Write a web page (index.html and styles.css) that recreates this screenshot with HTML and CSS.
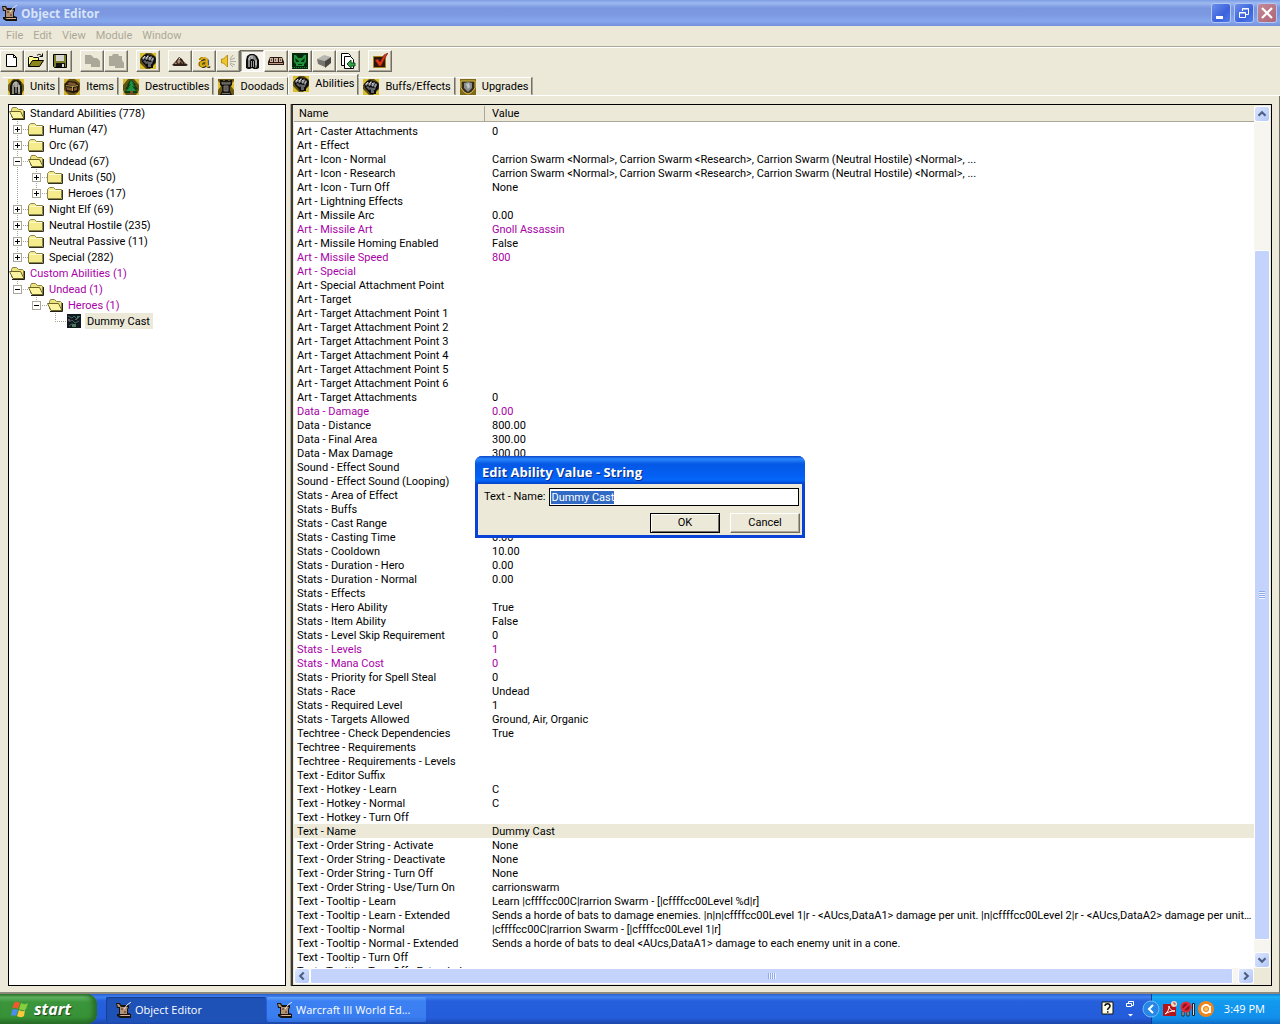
FILE: index.html
```html
<!DOCTYPE html>
<html lang="en">
<head>
  <meta charset="UTF-8">
  <meta name="viewport" content="width=device-width, initial-scale=1.0">
  <title>Object Editor</title>
  <link rel="stylesheet" href="styles.css">
</head>
<body>
  <!-- shared icons -->
  <svg class="sprites" aria-hidden="true">
    <symbol id="i-scroll" viewBox="0 0 16 16"><path d="M0 1h4l1 2h8v3l-1 1v4l3 1v4H4l-3-2v-2h2V6H1z" fill="#17120e"/><path d="M1 2h2l2 3H2zM4 5h8l-1 2v5H4z" fill="#b59273"/><path d="M3 13h11v1H5z" fill="#d6b392"/><path d="M5 6h2v2H5zM8 9h2v2H8z" fill="#806047"/><path d="M15 0l-4 3-3 4" fill="none" stroke="#e7e9ed"/></symbol>
    <symbol id="i-folder" viewBox="0 0 16 16"><path d="M.5 4.500l2-2h4l2 2h6v9H.5z" fill="#f5eb8c" stroke="#8b8547"/><path d="M2 5.500h12" stroke="#fffbd0"/><path d="M1 14.500h14.500V5" fill="none" stroke="#33301c"/></symbol>
    <symbol id="i-open" viewBox="0 0 16 16"><path d="M2.500 12V4.500l1-2h4l2 2h4l1 1V12z" fill="#eee27b" stroke="#898344"/><path d="M.5 6.500h11l3.500 7H4z" fill="#fbf39d" stroke="#6c662d"/><path d="M3 14.500h12.500V6" fill="none" stroke="#222015"/></symbol>
    <symbol id="i-fist" viewBox="0 0 16 16"><path fill="#5d4d12" d="M0 0h16v16H0z"/><path d="M0 0h6L0 6zM11 0h5v4zM0 10v6h6zM16 10v6h-6z" fill="#d9bf2c"/><path d="M1 5l3-3 3-1 3 1 4 1 2 3-1 4-2 2v3H7l-2-3-3-3z" fill="#0b0b0d"/><path d="M2 5l3-2 1 1-3 3zM5 6l3-4 1 1-2 4zM8 6l3-3 1 1-2 4zM11 7l2-3 1 2-2 3z" fill="#a2a2a4"/><path d="M3 8l2-1 3 3-2 1zM7 8l3 1 3-1-1 3-4 1zM8 12l3-1v3H8z" fill="#65666a"/><path d="M3 5l2-2M6 5l2-2M9 5l1-1" stroke="#dededf" stroke-width=".8"/></symbol>
    <symbol id="i-helm" viewBox="0 0 16 16"><path d="M2 15V7l1-4 3-2h4l3 2 2 4v8l-2 1h-3l-2-1-2 1H4z" fill="#0d0d0d"/><path d="M4 6l1-3 2-1h2l2 1 2 4v6l-1 2h-1V8L9 6H7L6 8v6H4z" fill="#858585"/><path d="M5 7V5l2-2M12 7v5M8 3v3" fill="none" stroke="#d4d4d4"/><path d="M7 8h1v6H7zM9 8h1v6H9z" fill="#999"/></symbol>
    <symbol id="i-unit" viewBox="0 0 16 16"><path d="M0 0h16v16H0z" fill="#6e5c15"/><path d="M0 0h5L0 6zM11 0h5v6zM0 11v5h3zM16 11v5h-3z" fill="#e0c33e"/><path d="M2 16V7l2-5 3-1h3l3 2 1 5v8z" fill="#15140f"/><path d="M4 15V7l2-4h4l2 4v8h-2V8H6v7z" fill="#8d8b83"/><path d="M5 6l2-3M8 2v12M11 6v7" fill="none" stroke="#cfccc0"/></symbol>
    <symbol id="i-chest" viewBox="0 0 16 16"><path d="M0 0h16v16H0z" fill="#665216"/><path d="M0 0h5L0 5zM11 0h5v4zM0 11v5h5zM16 11v5h-5z" fill="#cfb137"/><path d="M1 5l3-3 8 1 3 3-1 7-5 1-7-2z" fill="#1a130b"/><path d="M3 5l2-2 6 1 2 2-4 1zM2 8l6 1v3l-5-1zM10 9l3-1v3l-3 1z" fill="#815530"/><path d="M2 6.500l7 1 5-1M8.500 7v5" fill="none" stroke="#b8a04a"/></symbol>
    <symbol id="i-tree" viewBox="0 0 16 16"><path d="M0 0h16v16H0z" fill="#5f5313"/><path d="M0 0h5L0 6zM11 0h5v6zM0 11v5h3zM16 11v5h-3z" fill="#d3ba34"/><path d="M8 0l5 6h-1l3 4-2 1 2 3H1l3-4H2l3-4H4z" fill="#0d3b14"/><path d="M8 1l3 4-2-1 3 4-3-1 4 5H3l4-4-2 1 3-4-2 1z" fill="#1e9142"/><path d="M7 12h3v4H7z" fill="#7a4c25"/></symbol>
    <symbol id="i-tower" viewBox="0 0 16 16"><path d="M0 0h16v16H0z" fill="#6b5813"/><path d="M0 2v9l4-5zM16 2v9l-4-5z" fill="#dcc03a"/><path d="M2 1h3v1h2V1h3v1h2V1h2v5l-2 2v4l2 4H2l2-4V8L2 6z" fill="#151411"/><path d="M4 3v2h8V3M6 7h4v5H6zM4 14.500h8" fill="#5c5a54" stroke="#76736c"/></symbol>
    <symbol id="i-shield" viewBox="0 0 16 16"><path d="M0 0h16v16H0z" fill="#80681b"/><path d="M1 2h14v7l-3 4-4 2-4-2-3-4z" fill="#332b19" stroke="#e1c64c"/><path d="M4 4l4-1 4 1v5l-4 4-4-4z" fill="#8b8e91"/><path d="M6 5l3-1 1 4-2 2z" fill="#c2c4c6"/></symbol>
    <symbol id="i-mound" viewBox="0 0 16 16"><path d="M0 12l3-3 4-5 3 2 2 3 4 3-2 1H2z" fill="#302019"/><path d="M2 11l2-2 1 2zM5 9l2-4 1 2 1 1-2 3zM9 8l2 2-1 1zM12 11l1-1 1 1z" fill="#a98974"/><path d="M7 5l1 1" stroke="#e4d3c4"/></symbol>
    <symbol id="i-sound" viewBox="0 0 16 16"><path d="M1.500 6h2L7.500 2v12L3.500 10h-2z" fill="#efc631" stroke="#b8900f"/><path d="M10 6l3-4M10 7l5-2M10 8.500h6M10 10l5 2M10 11l3 3" stroke="#9a9a96" stroke-width=".8"/></symbol>
    <symbol id="i-cart" viewBox="0 0 16 16"><path d="M2 4h12l2 5v3H0V9z" fill="#2a1913"/><path d="M2 5h3v4H2zM6 5h4v4H6zM11 5h3v4h-3z" fill="#c9b5a4"/><path d="M3 6h1v2H3zM7 6h1v2H7zM12 6h1v2h-1z" fill="#7c4637"/><path d="M1 10.500h14" stroke="#c49c86"/></symbol>
    <symbol id="i-skull" viewBox="0 0 16 16"><path d="M0 0h16v16H0z" fill="#06290d"/><path d="M2 2h2l2 3h4l2-3h2v7l-2 2v2H4v-2L2 9z" fill="#20913b"/><path d="M3 5l4 3v1H4zM13 5L9 8v1h3zM6 11h4v1H6z" fill="#04320b"/><path d="M0 14.500h16" stroke="#1a8f2b" stroke-dasharray="1 1"/></symbol>
    <symbol id="i-cube" viewBox="0 0 16 16"><path d="M1 6l7-4 7 2-6 4z" fill="#b7b5af"/><path d="M1 6l8 2v6l-7-3z" fill="#77746e"/><path d="M9 8l6-4v6l-6 5z" fill="#484641"/></symbol>
  </svg>

  <main class="window">
    <header class="titlebar">
      <svg class="icon"><use href="#i-scroll"/></svg>
      <h1>Object Editor</h1>
      <div class="sysbuttons">
        <button type="button" aria-label="Minimize"><svg viewBox="0 0 18 18"><path d="M4 12h7v3H4z" fill="#fff"/></svg></button>
        <button type="button" aria-label="Restore"><svg viewBox="0 0 18 18"><path d="M7.500 7V4.500h6v6H11M7 5h7M4.500 8.500h6v5h-6zM4 9h7" fill="none" stroke="#fff"/></svg></button>
        <button type="button" class="close" aria-label="Close"><svg viewBox="0 0 18 18"><path d="M4 4l10 10M14 4L4 14" stroke="#fff" stroke-width="2.200"/></svg></button>
      </div>
    </header>

    <nav class="menubar">
      <button type="button" disabled>File</button>
      <button type="button" disabled>Edit</button>
      <button type="button" disabled>View</button>
      <button type="button" disabled>Module</button>
      <button type="button" disabled>Window</button>
    </nav>

    <div class="toolbar">
      <div class="group">
        <button type="button" aria-label="New"><svg class="icon" viewBox="0 0 16 16"><path d="M2.500 1.500h7l3 3v9h-10z" fill="#fff" stroke="#000"/><path d="M9.500 1.500v3h3" fill="none" stroke="#000"/></svg></button>
        <button type="button" aria-label="Open"><svg class="icon" viewBox="0 0 16 16"><path d="M0.500 13.500v-9l1-1h3l1 1h5v3" fill="#fffb8b" stroke="#000"/><path d="M0.500 13.500l4-6h11l-4 6z" fill="#8c861b" stroke="#000"/><path d="M9 2.500c2-2 4-1 5 1M11.500 3.500h3v-3" fill="none" stroke="#000"/></svg></button>
        <button type="button" aria-label="Save"><svg class="icon" viewBox="0 0 16 16"><path d="M1.500 1.500h13v13h-12l-1-1z" fill="#7b7c26" stroke="#000"/><path d="M4 2h8v6H4z" fill="#d7d7cf"/><path d="M4 10h9v4H4z" fill="#111"/><path d="M10 11h2v3h-2z" fill="#ddd"/></svg></button>
      </div>
      <div class="group">
        <button type="button" disabled aria-label="Copy"><svg class="icon" viewBox="0 0 16 16"><path d="M1 2h6l3 3h3l3 3v6H7v-3H1z" fill="#aca899"/></svg></button>
        <button type="button" disabled aria-label="Paste"><svg class="icon" viewBox="0 0 16 16"><path d="M1 3h3l1-2h5l1 2h3v4l2 3v5H7v-2H1z" fill="#aca899"/></svg></button>
      </div>
      <div class="group">
        <button type="button" aria-label="New ability"><svg class="icon"><use href="#i-fist"/></svg></button>
      </div>
      <div class="group">
        <button type="button" aria-label="Terrain Editor"><svg class="icon"><use href="#i-mound"/></svg></button>
        <button type="button" aria-label="Trigger Editor" class="letter">a</button>
        <button type="button" aria-label="Sound Editor"><svg class="icon"><use href="#i-sound"/></svg></button>
        <button type="button" aria-label="Object Editor" class="pressed"><svg class="icon"><use href="#i-helm"/></svg></button>
        <button type="button" aria-label="Campaign Editor"><svg class="icon"><use href="#i-cart"/></svg></button>
        <button type="button" aria-label="AI Editor"><svg class="icon"><use href="#i-skull"/></svg></button>
        <button type="button" aria-label="Object Manager"><svg class="icon"><use href="#i-cube"/></svg></button>
        <button type="button" aria-label="Import Manager"><svg class="icon" viewBox="0 0 16 16"><path d="M1.500 0.500h7l2 2v10h-9z" fill="#fff" stroke="#000"/><path d="M4.500 3.500h6l3 3v9h-9z" fill="#fff" stroke="#000"/><path d="M7 11l4-4v3h4v3h-4v2z" fill="#37a64a" stroke="#124e1d"/></svg></button>
      </div>
      <div class="group">
        <button type="button" aria-label="Test Map"><svg class="icon" viewBox="0 0 16 16"><path d="M1.500 3.500h12v11h-12z" fill="#2b160b" stroke="#a98521"/><path d="M3 7l3-1 2 3 4-7 4-2-3 5-4 8H7z" fill="#e0361b" stroke="#66140a" stroke-width=".6"/></svg></button>
      </div>
    </div>

    <div class="tabs" role="tablist">
      <button type="button" role="tab"><svg class="icon"><use href="#i-unit"/></svg>Units</button>
      <button type="button" role="tab"><svg class="icon"><use href="#i-chest"/></svg>Items</button>
      <button type="button" role="tab"><svg class="icon"><use href="#i-tree"/></svg>Destructibles</button>
      <button type="button" role="tab"><svg class="icon"><use href="#i-tower"/></svg>Doodads</button>
      <button type="button" role="tab" class="selected" aria-selected="true"><svg class="icon"><use href="#i-fist"/></svg>Abilities</button>
      <button type="button" role="tab"><svg class="icon"><use href="#i-fist"/></svg>Buffs/Effects</button>
      <button type="button" role="tab"><svg class="icon"><use href="#i-shield"/></svg>Upgrades</button>
    </div>

    <div class="panes">
      <div class="tree">
        <ul>
          <li>
            <div class="node"><svg class="icon"><use href="#i-open"/></svg><span>Standard Abilities (778)</span></div>
            <ul>
              <li><div class="node"><button type="button" class="toggle plus" aria-label="Expand"></button><svg class="icon"><use href="#i-folder"/></svg><span>Human (47)</span></div></li>
              <li><div class="node"><button type="button" class="toggle plus" aria-label="Expand"></button><svg class="icon"><use href="#i-folder"/></svg><span>Orc (67)</span></div></li>
              <li>
                <div class="node"><button type="button" class="toggle" aria-label="Collapse"></button><svg class="icon"><use href="#i-open"/></svg><span>Undead (67)</span></div>
                <ul>
                  <li><div class="node"><button type="button" class="toggle plus" aria-label="Expand"></button><svg class="icon"><use href="#i-folder"/></svg><span>Units (50)</span></div></li>
                  <li><div class="node"><button type="button" class="toggle plus" aria-label="Expand"></button><svg class="icon"><use href="#i-folder"/></svg><span>Heroes (17)</span></div></li>
                </ul>
              </li>
              <li><div class="node"><button type="button" class="toggle plus" aria-label="Expand"></button><svg class="icon"><use href="#i-folder"/></svg><span>Night Elf (69)</span></div></li>
              <li><div class="node"><button type="button" class="toggle plus" aria-label="Expand"></button><svg class="icon"><use href="#i-folder"/></svg><span>Neutral Hostile (235)</span></div></li>
              <li><div class="node"><button type="button" class="toggle plus" aria-label="Expand"></button><svg class="icon"><use href="#i-folder"/></svg><span>Neutral Passive (11)</span></div></li>
              <li><div class="node"><button type="button" class="toggle plus" aria-label="Expand"></button><svg class="icon"><use href="#i-folder"/></svg><span>Special (282)</span></div></li>
            </ul>
          </li>
          <li>
            <div class="node changed"><svg class="icon"><use href="#i-open"/></svg><span>Custom Abilities (1)</span></div>
            <ul>
              <li>
                <div class="node changed"><button type="button" class="toggle" aria-label="Collapse"></button><svg class="icon"><use href="#i-open"/></svg><span>Undead (1)</span></div>
                <ul>
                  <li>
                    <div class="node changed"><button type="button" class="toggle" aria-label="Collapse"></button><svg class="icon"><use href="#i-open"/></svg><span>Heroes (1)</span></div>
                    <ul>
                      <li><div class="node leaf"><svg class="icon" viewBox="0 0 16 16"><path d="M1 1h14v14H1z" fill="#10191b"/><path d="M2 3l4 2 2-2 3 3 3-3M3 9l3-2 3 3 4-2M3 13l3-2 3 1" fill="none" stroke="#47696b"/><path d="M6 11h4v3H6zM11 3h2v2h-2z" fill="#4b7962"/><path d="M2 6h2v2H2zM9 6h2v1H9z" fill="#7b5460"/></svg><span class="current">Dummy Cast</span></div></li>
                    </ul>
                  </li>
                </ul>
              </li>
            </ul>
          </li>
        </ul>
      </div>

      <div class="splitter"></div>

      <div class="list">
        <div class="rows">
          <table>
            <thead>
              <tr><th>Name</th><th>Value</th></tr>
            </thead>
            <tbody>
              <tr><td>Art - Caster Attachments</td><td>0</td></tr>
              <tr><td>Art - Effect</td><td></td></tr>
              <tr><td>Art - Icon - Normal</td><td>Carrion Swarm &lt;Normal&gt;, Carrion Swarm &lt;Research&gt;, Carrion Swarm (Neutral Hostile) &lt;Normal&gt;, ...</td></tr>
              <tr><td>Art - Icon - Research</td><td>Carrion Swarm &lt;Normal&gt;, Carrion Swarm &lt;Research&gt;, Carrion Swarm (Neutral Hostile) &lt;Normal&gt;, ...</td></tr>
              <tr><td>Art - Icon - Turn Off</td><td>None</td></tr>
              <tr><td>Art - Lightning Effects</td><td></td></tr>
              <tr><td>Art - Missile Arc</td><td>0.00</td></tr>
              <tr class="changed"><td>Art - Missile Art</td><td>Gnoll Assassin</td></tr>
              <tr><td>Art - Missile Homing Enabled</td><td>False</td></tr>
              <tr class="changed"><td>Art - Missile Speed</td><td>800</td></tr>
              <tr class="changed"><td>Art - Special</td><td></td></tr>
              <tr><td>Art - Special Attachment Point</td><td></td></tr>
              <tr><td>Art - Target</td><td></td></tr>
              <tr><td>Art - Target Attachment Point 1</td><td></td></tr>
              <tr><td>Art - Target Attachment Point 2</td><td></td></tr>
              <tr><td>Art - Target Attachment Point 3</td><td></td></tr>
              <tr><td>Art - Target Attachment Point 4</td><td></td></tr>
              <tr><td>Art - Target Attachment Point 5</td><td></td></tr>
              <tr><td>Art - Target Attachment Point 6</td><td></td></tr>
              <tr><td>Art - Target Attachments</td><td>0</td></tr>
              <tr class="changed"><td>Data - Damage</td><td>0.00</td></tr>
              <tr><td>Data - Distance</td><td>800.00</td></tr>
              <tr><td>Data - Final Area</td><td>300.00</td></tr>
              <tr><td>Data - Max Damage</td><td>300.00</td></tr>
              <tr><td>Sound - Effect Sound</td><td></td></tr>
              <tr><td>Sound - Effect Sound (Looping)</td><td></td></tr>
              <tr><td>Stats - Area of Effect</td><td></td></tr>
              <tr><td>Stats - Buffs</td><td></td></tr>
              <tr><td>Stats - Cast Range</td><td></td></tr>
              <tr><td>Stats - Casting Time</td><td>0.00</td></tr>
              <tr><td>Stats - Cooldown</td><td>10.00</td></tr>
              <tr><td>Stats - Duration - Hero</td><td>0.00</td></tr>
              <tr><td>Stats - Duration - Normal</td><td>0.00</td></tr>
              <tr><td>Stats - Effects</td><td></td></tr>
              <tr><td>Stats - Hero Ability</td><td>True</td></tr>
              <tr><td>Stats - Item Ability</td><td>False</td></tr>
              <tr><td>Stats - Level Skip Requirement</td><td>0</td></tr>
              <tr class="changed"><td>Stats - Levels</td><td>1</td></tr>
              <tr class="changed"><td>Stats - Mana Cost</td><td>0</td></tr>
              <tr><td>Stats - Priority for Spell Steal</td><td>0</td></tr>
              <tr><td>Stats - Race</td><td>Undead</td></tr>
              <tr><td>Stats - Required Level</td><td>1</td></tr>
              <tr><td>Stats - Targets Allowed</td><td>Ground, Air, Organic</td></tr>
              <tr><td>Techtree - Check Dependencies</td><td>True</td></tr>
              <tr><td>Techtree - Requirements</td><td></td></tr>
              <tr><td>Techtree - Requirements - Levels</td><td></td></tr>
              <tr><td>Text - Editor Suffix</td><td></td></tr>
              <tr><td>Text - Hotkey - Learn</td><td>C</td></tr>
              <tr><td>Text - Hotkey - Normal</td><td>C</td></tr>
              <tr><td>Text - Hotkey - Turn Off</td><td></td></tr>
              <tr class="current"><td>Text - Name</td><td>Dummy Cast</td></tr>
              <tr><td>Text - Order String - Activate</td><td>None</td></tr>
              <tr><td>Text - Order String - Deactivate</td><td>None</td></tr>
              <tr><td>Text - Order String - Turn Off</td><td>None</td></tr>
              <tr><td>Text - Order String - Use/Turn On</td><td>carrionswarm</td></tr>
              <tr><td>Text - Tooltip - Learn</td><td>Learn |cffffcc00C|rarrion Swarm - [|cffffcc00Level %d|r]</td></tr>
              <tr><td>Text - Tooltip - Learn - Extended</td><td>Sends a horde of bats to damage enemies. |n|n|cffffcc00Level 1|r - &lt;AUcs,DataA1&gt; damage per unit. |n|cffffcc00Level 2|r - &lt;AUcs,DataA2&gt; damage per unit. |n|...</td></tr>
              <tr><td>Text - Tooltip - Normal</td><td>|cffffcc00C|rarrion Swarm - [|cffffcc00Level 1|r]</td></tr>
              <tr><td>Text - Tooltip - Normal - Extended</td><td>Sends a horde of bats to deal &lt;AUcs,DataA1&gt; damage to each enemy unit in a cone.</td></tr>
              <tr><td>Text - Tooltip - Turn Off</td><td></td></tr>
              <tr><td>Text - Tooltip - Turn Off - Extended</td><td></td></tr>
            </tbody>
          </table>
        </div>
        <div class="scrollbar vertical">
          <button type="button" aria-label="Scroll up"><svg viewBox="0 0 16 16"><path d="M4 10l4-4 4 4"/></svg></button>
          <div class="track"><div class="thumb"></div></div>
          <button type="button" aria-label="Scroll down"><svg viewBox="0 0 16 16"><path d="M4 6l4 4 4-4"/></svg></button>
        </div>
        <div class="scrollbar horizontal">
          <button type="button" aria-label="Scroll left"><svg viewBox="0 0 16 16"><path d="M10 4L6 8l4 4"/></svg></button>
          <div class="track"><div class="thumb"></div></div>
          <button type="button" aria-label="Scroll right"><svg viewBox="0 0 16 16"><path d="M6 4l4 4-4 4"/></svg></button>
        </div>
      </div>
    </div>

    <form class="dialog" role="dialog" aria-labelledby="dialogTitle">
      <h2 id="dialogTitle">Edit Ability Value - String</h2>
      <div class="field">
        <label for="value">Text - Name:</label>
        <input type="text" id="value" value="Dummy Cast" autocomplete="off" spellcheck="false">
      </div>
      <div class="actions">
        <button type="submit" class="default">OK</button>
        <button type="button">Cancel</button>
      </div>
    </form>
  </main>

  <footer class="taskbar">
    <button type="button" class="start">
      <svg viewBox="0 0 18 18"><path d="M3 3c2-2 4-1 6 0L7 9C5 8 3 7 1 9z" fill="#ef5a2a"/><path d="M10 3c2 1 4 2 7 0l-2 6c-2 2-5 1-7 0z" fill="#84cf3d"/><path d="M1 10c2-1 4-1 6 0l-2 6c-2-1-4-1-5 0z" fill="#4b8df0"/><path d="M8 10c2 1 4 2 6 0l-1 6c-3 2-5 1-7 0z" fill="#fbc93a"/></svg>
      start
    </button>
    <div class="tasks">
      <button type="button" class="active"><svg class="icon"><use href="#i-scroll"/></svg>Object Editor</button>
      <button type="button"><svg class="icon"><use href="#i-scroll"/></svg>Warcraft III World Ed...</button>
    </div>
    <div class="langbar">
      <svg class="icon" viewBox="0 0 16 16"><path d="M2 1h11v12H2z" fill="#fffde6" stroke="#111"/><path d="M5 5c0-3 5-3 5 0 0 2-2 1.500-2.500 4M7 11h1.500" fill="none" stroke="#111" stroke-width="1.500"/></svg>
      <svg class="restore" viewBox="0 0 8 18"><path d="M2.500 3V1.500h5v4H6M.500 3.500h5v3h-5z" fill="none" stroke="#fff"/><path d="M2 14h5l-2.500 2.500z" fill="#fff"/></svg>
    </div>
    <div class="tray">
      <button type="button" class="chevron" aria-label="Show hidden icons"><svg viewBox="0 0 18 18"><circle cx="9" cy="9" r="8" fill="#2787e6" stroke="#70b8fa"/><path d="M11 5L7 9l4 4" fill="none" stroke="#fff" stroke-width="2"/></svg></button>
      <svg class="icon" viewBox="0 0 16 16"><path d="M1 3h13v12H1z" fill="#b3151a"/><path d="M3 13c3-2 4-5 4-8 1 4 3 5 6 5-4 0-7 1-10 3z" fill="none" stroke="#fff"/><circle cx="12" cy="3" r="3" fill="#f6d8bd"/><path d="M12 1v2h2" stroke="#a44" fill="none"/></svg>
      <svg class="icon" viewBox="0 0 16 16"><path d="M2 10h2v5H2zM7 10h2v5H7zM12.500 2.500h2v12h-2z" fill="#d6d9df" stroke="#222"/><circle cx="6" cy="6" r="4.500" fill="#8a1420" stroke="#e32b37" stroke-width="2"/><path d="M3 9l6-6" stroke="#e32b37" stroke-width="2"/></svg>
      <svg class="icon" viewBox="0 0 16 16"><circle cx="8" cy="8" r="8" fill="#ee861b"/><circle cx="8" cy="8" r="4" fill="none" stroke="#fff" stroke-width="2"/><path d="M12 5v7" stroke="#fff" stroke-width="2"/><circle cx="8" cy="8" r="2" fill="#ffc45b"/></svg>
      <time>3:49 PM</time>
    </div>
  </footer>

  <script>
    const value = document.getElementById('value');
    value.focus();
    value.select();

    document.querySelector('.dialog').addEventListener('submit', function(e) {
      e.preventDefault();
    });
  </script>
</body>
</html>
```

FILE: styles.css
```css
* {
  box-sizing: border-box;
}
body {
  display: flex;
  flex-direction: column;
  height: 100vh;
  margin: 0;
  overflow: hidden;
  background: #ece9d8;
  color: #000;
  font-family: Roboto, "Liberation Sans", Arial, sans-serif;
  font-size: 11px;
  line-height: 14px;
}
button, input {
  margin: 0;
  padding: 0;
  border: 0;
  background: none;
  color: inherit;
  font: inherit;
}
ul {
  margin: 0;
  padding: 0;
  list-style: none;
}
svg {
  display: block;
  flex: none;
}
.sprites {
  display: none;
}
.icon {
  width: 16px;
  height: 16px;
}
.window {
  position: relative;
  display: flex;
  flex: 1;
  flex-direction: column;
  min-height: 0;
}

/* title bar */
.titlebar {
  display: flex;
  align-items: center;
  height: 26px;
  padding: 0 3px 0 2px;
  background: linear-gradient(#7e9ce6, #9cb9f0 3px, #7a96df 8px, #7c99e2 15px, #87a8ec 21px, #7691db);
}
.titlebar h1 {
  flex: 1;
  margin: 0 0 0 3px;
  color: #d8e4f8;
  font: bold 12px "Open Sans", sans-serif;
}
.sysbuttons {
  display: flex;
  gap: 3px;
}
.sysbuttons button {
  width: 20px;
  height: 20px;
  border: 1px solid #b4c7f2;
  border-radius: 3px;
  background: linear-gradient(135deg, #6c8eea, #3b62dc 60%, #4f7bea);
}
.sysbuttons .close {
  background: linear-gradient(135deg, #c28a98, #b06475);
}

/* menu and toolbar */
.menubar {
  display: flex;
  height: 21px;
  padding-left: 1px;
  border-bottom: 1px solid #aca899;
  box-shadow: 0 1px #fff;
}
.menubar button {
  padding: 0 5px;
  color: #aca899;
}
.toolbar {
  display: flex;
  gap: 8px;
  padding: 3px 0;
}
.group {
  display: flex;
}
.toolbar button {
  display: flex;
  align-items: center;
  justify-content: center;
  width: 24px;
  height: 22px;
  border: 1px solid;
  border-color: #fff #716f64 #716f64 #fff;
  box-shadow: inset -1px -1px #aca899;
}
.toolbar .letter {
  color: #d8ad17;
  font: bold 18px "Liberation Sans", sans-serif;
  line-height: 16px;
  text-shadow: 1px 1px #3a2c05, -1px 0 #6b5108;
}
.toolbar .pressed {
  border-color: #716f64 #fff #fff #716f64;
  background: #f6f4ec;
  box-shadow: inset 1px 1px #aca899;
}

/* tabs */
.tabs {
  display: flex;
  align-items: flex-end;
  height: 21px;
  padding-left: 2px;
  border-bottom: 1px solid #fff;
}
.tabs button {
  display: flex;
  align-items: center;
  gap: 6px;
  height: 18px;
  padding: 1px 3px 0 4px;
  border: 1px solid;
  border-color: #fff #716f64 transparent transparent;
  box-shadow: 1px 0 #aca899;
}
.tabs button:first-child {
  padding-left: 5px;
}
.tabs .selected {
  height: 21px;
  padding-bottom: 2px;
  border-left-color: #fff;
}

/* panes */
.panes {
  display: flex;
  flex: 1;
  min-height: 0;
  padding: 8px 7px 6px 8px;
  border-right: 1px solid #716f64;
  border-bottom: 2px solid #8d8a7d;
}
.tree {
  width: 278px;
  border: 1px solid #000;
  background: #fff;
  overflow: hidden;
}
.tree li {
  position: relative;
}
.tree ul ul {
  margin-left: 4px;
}
.tree ul ul ul {
  margin-left: 19px;
}
.tree ul ul > li::before {
  content: "";
  position: absolute;
  top: 0;
  bottom: 0;
  left: 4px;
  width: 1px;
  background: repeating-linear-gradient(#aca899 0 1px, #fff 1px 2px);
}
.tree ul ul > li:last-child::before {
  bottom: auto;
  height: 8px;
}
.node {
  position: relative;
  display: flex;
  align-items: center;
  height: 16px;
}
.node span {
  margin-left: 3px;
  padding: 2px 3px 0 2px;
}
.toggle {
  width: 9px;
  height: 9px;
  margin-right: 6px;
  border: 1px solid #aca899;
  background: linear-gradient(#000, #000) center / 5px 1px no-repeat #fff;
}
.toggle.plus {
  background: linear-gradient(#000, #000) center / 5px 1px no-repeat, linear-gradient(#000, #000) center / 1px 5px no-repeat #fff;
}
.toggle::after {
  content: "";
  display: block;
  width: 5px;
  height: 1px;
  margin-left: 9px;
  background: repeating-linear-gradient(90deg, #aca899 0 1px, #fff 1px 2px);
}
.leaf::before {
  content: "";
  width: 11px;
  height: 1px;
  margin-left: 4px;
  background: repeating-linear-gradient(90deg, #aca899 0 1px, #fff 1px 2px);
}
.changed {
  color: #a800a8;
}
.current {
  background: #ece9d8;
}
.splitter {
  width: 5px;
  border-right: 1px solid #aca899;
}
.list {
  display: grid;
  flex: 1;
  grid-template-columns: 1fr 16px;
  grid-template-rows: 1fr 16px;
  min-width: 0;
  padding: 1px;
  border: 1px solid #000;
  border-left: 2px solid #3c3a33;
}
.rows {
  min-width: 0;
  min-height: 0;
  background: #fff;
  overflow: hidden;
}
table {
  width: 100%;
  border-collapse: separate;
  border-spacing: 0;
  table-layout: fixed;
}
th {
  height: 16px;
  padding: 1px 5px 0;
  border-right: 1px solid #aca899;
  border-bottom: 1px solid #aca899;
  background: #ece9d8;
  font-weight: normal;
  text-align: left;
}
th:first-child {
  width: 191px;
}
th:last-child {
  padding-left: 7px;
  border-right: 0;
}
tbody::before {
  content: "";
  display: block;
  height: 2px;
}
td {
  height: 14px;
  padding: 2px 3px 0;
  line-height: 12px;
  overflow: hidden;
  text-overflow: ellipsis;
  white-space: nowrap;
}
td:last-child {
  padding: 2px 0 0 7px;
}

/* scroll bars */
.scrollbar {
  display: flex;
  background: #f6f5ef;
}
.scrollbar button {
  flex: none;
  width: 16px;
  height: 16px;
  border: 1px solid #fff;
  border-radius: 3px;
  background: linear-gradient(135deg, #dbe5ff, #b4c8f8);
}
.scrollbar svg {
  fill: none;
  stroke: #4d6185;
  stroke-width: 2.5px;
}
.track {
  display: flex;
  flex: 1;
}
.thumb {
  border: 1px solid #fff;
  border-radius: 2px;
  background: #c4d3fc;
}
.vertical {
  flex-direction: column;
}
.vertical .track {
  flex-direction: column;
  padding: 128px 0 12px;
}
.vertical .thumb {
  flex: 1;
  width: 16px;
  background: repeating-linear-gradient(#8ea9e8 0 1px, #eef3ff 1px 2px) center / 6px 8px no-repeat #c4d3fc;
}
.horizontal .track {
  padding-right: 5px;
}
.horizontal .thumb {
  flex: 1;
  background: repeating-linear-gradient(90deg, #8ea9e8 0 1px, #eef3ff 1px 2px) center / 8px 6px no-repeat #c4d3fc;
}

/* dialog */
.dialog {
  position: absolute;
  top: 50%;
  left: 50%;
  width: 330px;
  padding: 0 3px 3px;
  border-radius: 7px 7px 0 0;
  background: #0842d6;
  transform: translate(-50%, -50%);
}
.dialog h2 {
  height: 28px;
  margin: 0 -3px;
  padding: 0 7px;
  border-radius: 7px 7px 0 0;
  background: linear-gradient(#0a45c8, #2b87fb 3px, #0458e4 8px, #0360f4 20px, #0567fb 24px, #0242c8);
  color: #fff;
  font: bold 13px "Open Sans", sans-serif;
  line-height: 32px;
  text-shadow: 1px 1px #0b2c86;
}
.field {
  display: flex;
  align-items: center;
  gap: 4px;
  padding: 4px 3px 0 6px;
  background: #ece9d8;
}
.field input {
  flex: 1;
  min-width: 0;
  height: 18px;
  padding: 0 1px;
  border: 1px solid #000;
  background: #fff;
  outline: 0;
}
.field input::selection {
  background: #316ac5;
  color: #fff;
}
.actions {
  display: flex;
  justify-content: flex-end;
  gap: 10px;
  padding: 7px 2px 2px;
  background: #ece9d8;
}
.actions button {
  width: 70px;
  height: 20px;
  border: 1px solid;
  border-color: #fff #716f64 #716f64 #fff;
  box-shadow: inset -1px -1px #aca899;
}
.actions .default {
  border-color: #000;
  box-shadow: inset 1px 1px #fff, inset -1px -1px #716f64;
}

/* task bar */
.taskbar {
  display: flex;
  flex: none;
  height: 30px;
  background: linear-gradient(#2a5fd0, #3f82f0 3px, #2660dc 7px, #245cdb 24px, #1c46a8);
  color: #fff;
  font-family: "Open Sans", sans-serif;
}
.start {
  display: flex;
  align-items: center;
  gap: 5px;
  width: 97px;
  padding-left: 11px;
  border-radius: 0 10px 10px 0;
  background: linear-gradient(#2c7a2c, #64b464 3px, #3b963b 8px, #379237 23px, #276c27);
  box-shadow: inset -4px 0 5px #276c27;
  font: italic bold 16px "Open Sans", sans-serif;
  text-shadow: 1px 1px 1px #1c481c;
}
.start svg {
  width: 18px;
  height: 18px;
}
.tasks {
  display: flex;
  flex: 1;
  gap: 1px;
  min-width: 0;
  padding: 3px 0 2px 9px;
}
.tasks button {
  display: flex;
  align-items: center;
  gap: 3px;
  width: 159px;
  padding-left: 10px;
  border-radius: 2px;
  background: linear-gradient(#62a0fa, #3c81f3 4px, #3a7df0 20px, #316fdd);
  white-space: nowrap;
}
.tasks .active {
  width: 160px;
  background: #1e52b7;
  box-shadow: inset 1px 1px 1px #163f91;
}
.langbar {
  display: flex;
  align-items: center;
  gap: 10px;
  padding-right: 17px;
}
.langbar .restore {
  width: 8px;
  height: 18px;
}
.tray {
  display: flex;
  align-items: center;
  gap: 2px;
  padding-right: 15px;
  border-left: 1px solid #0c3f9c;
  background: linear-gradient(#0f7fd8, #1bb0f5 3px, #129aee 7px, #118fec 24px, #0d6cc4);
}
.chevron {
  width: 18px;
  height: 18px;
  margin-left: -10px;
}
.tray time {
  margin-left: 8px;
}
```
